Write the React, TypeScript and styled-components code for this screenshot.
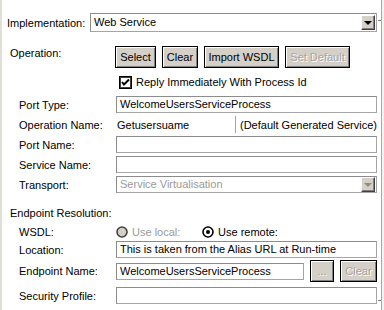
import styled, { createGlobalStyle } from 'styled-components';

const GlobalStyle = createGlobalStyle`
  html, body {
    margin: 0;
    padding: 0;
    background: #ffffff;
  }
  body {
    font-family: "Liberation Sans", Arial, sans-serif;
    font-size: 11px;
    color: #000000;
  }
`;

const Page = styled.div`
  display: flex;
  width: 384px;
  height: 310px;
  background: #ffffff;
  overflow: hidden;
`;

const Strip = styled.div`
  width: 3px;
  background: #e2dfd8;
`;

const Form = styled.div`
  flex: 1;
  display: flex;
  flex-direction: column;
  padding: 13px 4px 0 5px;
`;

const Edge = styled.div`
  position: relative;
  width: 3px;
  border-left: 1px solid #a9a9a9;
  background: #f4f3f0;

  &::before,
  &::after {
    content: '';
    position: absolute;
    left: -4px;
    width: 3px;
    height: 1px;
    background: #7a7a7a;
  }
  &::before {
    top: 20px;
  }
  &::after {
    top: 300px;
  }
`;

const Row = styled.div<{ $top: number; $h: number; $indent?: number; $align?: string }>`
  display: flex;
  align-items: ${(p) => p.$align || 'center'};
  height: ${(p) => p.$h}px;
  margin-top: ${(p) => p.$top}px;
  padding-left: ${(p) => p.$indent || 0}px;
`;

const Label = styled.div<{ $w: number }>`
  flex: none;
  width: ${(p) => p.$w}px;
  line-height: 14px;
  white-space: nowrap;
`;

const Field = styled.div`
  flex: 1;
  display: flex;
  align-items: center;
  gap: 6px;
  height: 100%;
  min-width: 0;
`;

const TextBox = styled.div<{ $disabled?: boolean }>`
  flex: 1;
  height: 17px;
  box-sizing: border-box;
  border: 1px solid #a5a5a5;
  border-top-color: #8c8c8c;
  border-left-color: #8c8c8c;
  background: #ffffff;
  padding: 0 3px;
  line-height: 15px;
  color: ${(p) => (p.$disabled ? '#9a9a9a' : '#000000')};
  white-space: nowrap;
  overflow: hidden;
  display: flex;
  align-items: center;
  justify-content: space-between;
`;

const ComboBox = styled(TextBox)`
  height: 19px;
  padding: 0 1px 0 3px;
`;

const DropButton = styled.div<{ $disabled?: boolean }>`
  width: 14px;
  height: 15px;
  box-sizing: border-box;
  background: #d4d0c8;
  border: 1px solid;
  border-color: #ffffff #404040 #404040 #ffffff;
  box-shadow: inset -1px -1px #808080;
  display: flex;
  align-items: center;
  justify-content: center;

  &::after {
    content: '';
    border-left: 4px solid transparent;
    border-right: 4px solid transparent;
    border-top: 4px solid ${(p) => (p.$disabled ? '#8f8c86' : '#000000')};
  }
`;

const Button = styled.button<{ $w: number; $disabled?: boolean }>`
  flex: none;
  width: ${(p) => p.$w}px;
  height: 22px;
  padding: 0;
  box-sizing: border-box;
  font-family: "Liberation Sans", Arial, sans-serif;
  font-size: 11px;
  background: #d4d0c8;
  border: 1px solid #000000;
  box-shadow: inset 1px 1px #ffffff, inset -1px -1px #808080;
  color: ${(p) => (p.$disabled ? '#a7a49d' : '#000000')};
  text-shadow: ${(p) => (p.$disabled ? '1px 1px 0 #ffffff' : 'none')};
`;

const Buttons = styled.div`
  display: flex;
  gap: 6px;
`;

const Check = styled.label`
  display: flex;
  align-items: center;
  gap: 4px;
  margin-left: 1px;
`;

const Plain = styled.div`
  display: flex;
  align-items: center;
  height: 17px;
  width: 100%;
  white-space: nowrap;
`;

const OpName = styled.span`
  width: 118px;
  padding-left: 1px;
`;

const Divider = styled.span`
  align-self: stretch;
  border-left: 1px solid #a5a5a5;
  margin-right: 4px;
`;

const Radio = styled.label<{ $disabled?: boolean; $w?: number }>`
  display: flex;
  align-items: center;
  gap: 4px;
  width: ${(p) => (p.$w ? `${p.$w}px` : 'auto')};
  color: ${(p) => (p.$disabled ? '#9a9a9a' : '#000000')};
`;

const CheckIcon = () => (
  <svg width="13" height="13" viewBox="0 0 13 13">
    <rect x="0.5" y="0.5" width="12" height="12" fill="#ffffff" stroke="#000000" />
    <rect x="1.5" y="1.5" width="10" height="10" fill="none" stroke="#404040" />
    <path d="M3 6 L5 8.5 L10 3.5" fill="none" stroke="#000000" strokeWidth="2" />
  </svg>
);

const RadioIcon = ({ on, off }: { on?: boolean; off?: boolean }) => (
  <svg width="12" height="12" viewBox="0 0 12 12">
    <circle cx="6" cy="6" r="5" fill={off ? '#d4d0c8' : '#ffffff'} stroke={off ? '#404040' : '#000000'} strokeWidth="1.6" />
    {on && <circle cx="6" cy="6" r="2" fill="#000000" />}
  </svg>
);

export default function App() {
  return (
    <Page>
      <GlobalStyle />
      <Strip />
      <Form>
        <Row $top={0} $h={19}>
          <Label $w={83}>Implementation:</Label>
          <Field>
            <ComboBox>
              Web Service
              <DropButton />
            </ComboBox>
          </Field>
        </Row>

        <Row $top={14} $h={22} $indent={3} $align="flex-start">
          <Label $w={105}>Operation:</Label>
          <Field>
            <Buttons>
              <Button $w={41}>Select</Button>
              <Button $w={36}>Clear</Button>
              <Button $w={75}>Import WSDL</Button>
              <Button $w={65} $disabled>
                Set Default
              </Button>
            </Buttons>
          </Field>
        </Row>

        <Row $top={7} $h={14} $indent={111}>
          <Check>
            <CheckIcon />
            Reply Immediately With Process Id
          </Check>
        </Row>

        <Row $top={7} $h={17} $indent={12}>
          <Label $w={97}>Port Type:</Label>
          <Field>
            <TextBox>WelcomeUsersServiceProcess</TextBox>
          </Field>
        </Row>
        <Row $top={3} $h={17} $indent={12}>
          <Label $w={97}>Operation Name:</Label>
          <Field>
            <Plain>
              <OpName>Getusersuame</OpName>
              <Divider />
              (Default Generated Service)
            </Plain>
          </Field>
        </Row>
        <Row $top={3} $h={17} $indent={12}>
          <Label $w={97}>Port Name:</Label>
          <Field>
            <TextBox />
          </Field>
        </Row>
        <Row $top={3} $h={17} $indent={12}>
          <Label $w={97}>Service Name:</Label>
          <Field>
            <TextBox />
          </Field>
        </Row>
        <Row $top={3} $h={17} $indent={12}>
          <Label $w={97}>Transport:</Label>
          <Field>
            <TextBox $disabled style={{ paddingRight: 1 }}>
              Service Virtualisation
              <DropButton $disabled />
            </TextBox>
          </Field>
        </Row>

        <Row $top={13} $h={14} $indent={3}>
          <Label $w={120}>Endpoint Resolution:</Label>
        </Row>

        <Row $top={5} $h={14} $indent={12}>
          <Label $w={97}>WSDL:</Label>
          <Field>
            <Radio $disabled $w={80}>
              <RadioIcon off />
              Use local:
            </Radio>
            <Radio>
              <RadioIcon on />
              Use remote:
            </Radio>
          </Field>
        </Row>

        <Row $top={2} $h={17} $indent={12}>
          <Label $w={97}>Location:</Label>
          <Field>
            <TextBox>This is taken from the Alias URL at Run-time</TextBox>
          </Field>
        </Row>

        <Row $top={2} $h={22} $indent={12}>
          <Label $w={97}>Endpoint Name:</Label>
          <Field>
            <TextBox>WelcomeUsersServiceProcess</TextBox>
            <Button $w={24} $disabled>
              ...
            </Button>
            <Button $w={37} $disabled>
              Clear
            </Button>
          </Field>
        </Row>

        <Row $top={5} $h={17} $indent={12}>
          <Label $w={97}>Security Profile:</Label>
          <Field>
            <TextBox />
          </Field>
        </Row>
      </Form>
      <Edge />
    </Page>
  );
}
